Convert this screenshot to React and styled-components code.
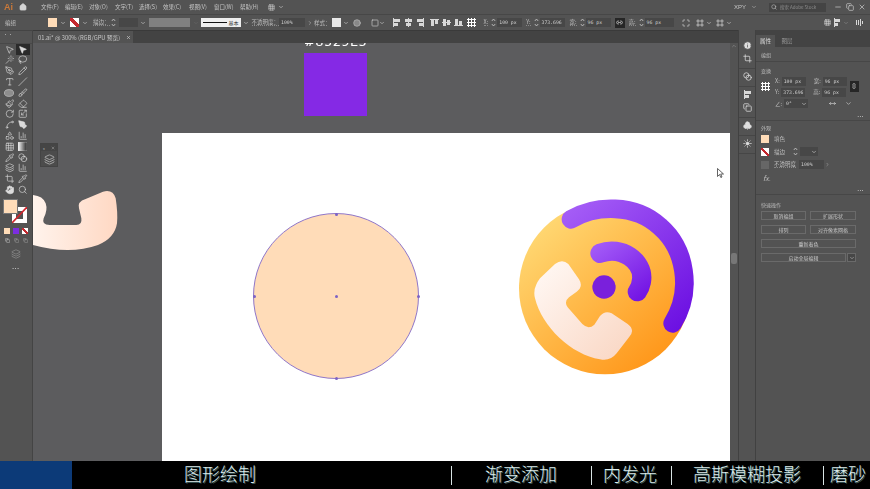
import styled, { createGlobalStyle } from "styled-components";
import {
  MousePointer2, Wand, Lasso, PenTool, Pencil, Type, Slash, Circle, Brush, Eraser,
  RotateCw, Scaling, Shapes, Pipette, ChartColumn, Crop, Hand, Search, Grid3x3,
  Blend, Layers, Copy, Info, X, Minus, House, ChevronDown, ChevronRight, ChevronUp,
  Link2, Club, Sun, Maximize, Spline, Frame, Paintbrush, MoveHorizontal, Square,
} from "lucide-react";

const GlobalStyle = createGlobalStyle`
  html, body { margin: 0; padding: 0; background: #535353; }
  body { font-family: "Noto Sans CJK SC", "Liberation Sans", sans-serif; }
`;

const Page = styled.div`
  width: 870px;
  height: 489px;
  display: flex;
  flex-direction: column;
  overflow: hidden;
  background: #535353;
  color: #c4c4c4;
  font-size: 6px;
`;
const Blurred = styled.div`
  flex: 1;
  min-height: 0;
  display: flex;
  flex-direction: column;
  filter: blur(0.3px);
`;
const MenuBar = styled.div`
  height: 14px;
  display: flex;
  align-items: center;
  flex-shrink: 0;
`;
const Logo = styled.span`
  margin-left: 4px;
  width: 15px;
  font: bold 9px "Liberation Sans", sans-serif;
  color: #c9793a;
`;
const HomeSlot = styled.span`
  width: 22px;
  display: flex;
  color: #d4d4d4;
`;
const MenuItem = styled.span`
  width: ${(p) => p.$w || 24.6}px;
  white-space: nowrap;
  font-size: 5.5px;
`;
const Spacer = styled.div`
  flex: 1;
`;
const WorkspaceName = styled.span`
  font: 6px "Liberation Sans", sans-serif;
  display: flex;
  align-items: center;
  gap: 5px;
  margin-right: 12px;
`;
const SearchBox = styled.div`
  width: 57px;
  height: 9px;
  background: #444;
  display: flex;
  align-items: center;
  gap: 3px;
  padding-left: 2px;
  box-sizing: border-box;
  font-size: 4.5px;
  color: #8a8a8a;
  white-space: nowrap;
  overflow: hidden;
`;
const WinButtons = styled.div`
  display: flex;
  gap: 4px;
  margin: 0 4px 0 8px;
  color: #d0d0d0;
`;
const ControlBar = styled.div`
  height: 15px;
  flex-shrink: 0;
  display: flex;
  align-items: center;
  border-top: 1px solid #474747;
  padding-left: 5px;
  white-space: nowrap;
`;
const Item = styled.div`
  margin-left: ${(p) => p.$ml || 0}px;
  margin-top: ${(p) => p.$mt || 0}px;
  display: flex;
  align-items: center;
  flex-shrink: 0;
  color: ${(p) => p.$color || "inherit"};
`;
const Label = styled.span`
  margin-left: ${(p) => p.$ml || 0}px;
  font-size: 5.5px;
  color: #bdbdbd;
  flex-shrink: 0;
  border-bottom: ${(p) => (p.$under ? "1px dotted #888" : "none")};
  line-height: 6px;
`;
const FxLabel = styled(Label)`
  font-style: italic;
  font-size: 7px;
`;
const Swatch = styled.div`
  margin-left: ${(p) => p.$ml || 0}px;
  width: ${(p) => p.$size || 9}px;
  height: ${(p) => p.$size || 9}px;
  flex-shrink: 0;
  background: ${(p) =>
    p.$none
      ? "linear-gradient(to top right, #fff 38%, #c4282f 38%, #c4282f 62%, #fff 62%)"
      : p.$bg || "#ffdcb8"};
`;
const Input = styled.div`
  margin-left: ${(p) => p.$ml || 0}px;
  width: ${(p) => p.$w || 25}px;
  height: 9px;
  background: ${(p) => (p.$bg ? p.$bg : "#474747")};
  flex-shrink: 0;
  display: flex;
  align-items: center;
  padding-left: 2px;
  box-sizing: border-box;
  font: 4.8px "DejaVu Sans Mono", monospace;
  color: #d0d0d0;
`;
const BrushBox = styled.div`
  margin-left: ${(p) => p.$ml}px;
  width: 40px;
  height: 9px;
  background: #eee;
  flex-shrink: 0;
  display: flex;
  align-items: center;
  gap: 2px;
  padding: 0 2px;
  box-sizing: border-box;
  color: #333;
  font-size: 5px;
`;
const StrokeLine = styled.div`
  flex: 1;
  height: 1px;
  background: #111;
`;
const LinkBox = styled.div`
  margin-left: ${(p) => p.$ml}px;
  margin-top: ${(p) => p.$mt || 0}px;
  width: ${(p) => p.$w || 10}px;
  height: ${(p) => p.$h || 10}px;
  background: #262626;
  flex-shrink: 0;
  display: flex;
  align-items: center;
  justify-content: center;
  color: #eee;

  svg {
    transform: ${(p) => (p.$upright ? "rotate(90deg)" : "none")};
  }
`;

const Body = styled.div`
  flex: 1;
  min-height: 0;
  display: flex;
`;
const ToolsPanel = styled.div`
  width: 32px;
  flex-shrink: 0;
  border-right: 1px solid #444;
  display: flex;
  flex-direction: column;
  align-items: center;
  border-top: 1px solid #444;
`;
const Grip = styled.div`
  width: 100%;
  height: 13px;
  border-bottom: 1px solid #484848;
  box-sizing: border-box;
  padding-left: 3px;
  font-size: 5px;
  line-height: 6px;
  color: #bbb;
`;
const ToolGrid = styled.div`
  display: grid;
  grid-template-columns: 13.5px 13.5px;
  grid-auto-rows: 10.8px;
`;
const Tool = styled.div`
  display: flex;
  align-items: center;
  justify-content: center;
  background: ${(p) => (p.$active ? "#2b2b2b" : "transparent")};
  color: #dcdcdc;
`;
const FillStroke = styled.div`
  position: relative;
  width: 26px;
  height: 25px;
  margin-top: 4px;
`;
const BigFill = styled.div`
  position: absolute;
  left: 0;
  top: 0;
  width: 15px;
  height: 15px;
  background: #ffdcb8;
  border: 1px solid #777;
  box-sizing: border-box;
  z-index: 2;
`;
const BigStroke = styled.svg`
  position: absolute;
  left: 9px;
  top: 8px;
  width: 15px;
  height: 16px;
`;
const SwatchRow = styled.div`
  display: flex;
  justify-content: center;
  gap: ${(p) => p.$gap || 3}px;
  margin-top: ${(p) => p.$mt || 0}px;
`;
const Dots = styled.div`
  margin-top: ${(p) => p.$mt || 0}px;
  font: bold 6px/6px "Liberation Sans", sans-serif;
  letter-spacing: 0.5px;
  color: #d0d0d0;
`;

const Center = styled.div`
  flex: 1;
  min-width: 0;
  display: flex;
  flex-direction: column;
`;
const TabBar = styled.div`
  height: 13px;
  flex-shrink: 0;
  background: #434343;
  display: flex;
  border-top: 1px solid #3a3a3a;
  box-sizing: border-box;
`;
const DocTab = styled.div`
  width: 100px;
  background: #535353;
  display: flex;
  align-items: center;
  justify-content: space-between;
  padding: 0 2px 0 5px;
  box-sizing: border-box;
  font-size: 5.8px;
  color: #c8c8c8;
  white-space: nowrap;
`;
const CanvasRow = styled.div`
  flex: 1;
  min-height: 0;
  display: flex;
`;
const Canvas = styled.div`
  flex: 1;
  position: relative;
  overflow: hidden;
  background: #5c5c5e;
`;
const ColorCode = styled.div`
  position: absolute;
  left: 271px;
  width: 63px;
  top: -9px;
  text-align: center;
  font: 13px/16px "DejaVu Sans", sans-serif;
  letter-spacing: 0.4px;
  color: #fff;
  white-space: nowrap;
`;
const PurpleSquare = styled.div`
  position: absolute;
  left: 271px;
  top: 10px;
  width: 63px;
  height: 63px;
  background: #8529e5;
`;
const Artboard = styled.div`
  position: absolute;
  left: 129px;
  top: 90px;
  width: 568px;
  bottom: 0;
  background: #fff;
`;
const LeftShape = styled.svg`
  position: absolute;
  left: 0;
  top: 147px;
  width: 90px;
  height: 70px;
  overflow: visible;
`;
const FloatPanel = styled.div`
  position: absolute;
  left: 7px;
  top: 100px;
  width: 18px;
  height: 24px;
  background: #4c4c4c;
  border: 1px solid #444;
  box-sizing: border-box;
  display: flex;
  flex-direction: column;
  align-items: center;
  color: #d5d5d5;
`;
const FloatHead = styled.div`
  width: 100%;
  height: 7px;
  background: #454545;
  display: flex;
  align-items: center;
  justify-content: space-between;
  padding: 0 2px;
  box-sizing: border-box;
  font-size: 4px;
  margin-bottom: 3px;
`;
const Peach = styled.div`
  position: absolute;
  left: 91px;
  top: 80px;
  width: 166px;
  height: 166px;
  box-sizing: border-box;
  border-radius: 50%;
  background: #ffdcb8;
  border: 1px solid #8f76c9;
`;
const Anchor = styled.i`
  position: absolute;
  left: ${(p) => p.$x}%;
  top: ${(p) => p.$y}%;
  width: 3px;
  height: 3px;
  margin: -1.5px;
  border-radius: 50%;
  background: #7d63c4;
`;
const AppIcon = styled.svg`
  position: absolute;
  left: 343px;
  top: 57px;
  width: 200px;
  height: 195px;
`;
const Cursor = styled.svg`
  position: absolute;
  left: 555px;
  top: 35px;
  width: 8px;
  height: 10px;
`;
const VScroll = styled.div`
  width: 8px;
  flex-shrink: 0;
  background: #535353;
  position: relative;
  color: #999;
  display: flex;
  justify-content: center;
`;
const Thumb = styled.div`
  position: absolute;
  left: 1px;
  top: 210px;
  width: 6px;
  height: 11px;
  border-radius: 2px;
  background: #777;
`;

const Dock = styled.div`
  width: 18px;
  flex-shrink: 0;
  border-left: 1px solid #414141;
  border-right: 1px solid #414141;
  box-sizing: border-box;
  display: flex;
  flex-direction: column;
  align-items: center;
  padding-top: 7.5px;
  color: #dedede;
`;
const DockGroup = styled.div`
  width: 100%;
  display: flex;
  flex-direction: column;
  align-items: center;
  gap: 4px;
  padding: 3px 0 5px;
  border-bottom: 1px solid #464646;
`;
const Props = styled.div`
  width: 114px;
  flex-shrink: 0;
  display: flex;
  flex-direction: column;
`;
const PropTabs = styled.div`
  height: 17px;
  flex-shrink: 0;
  background: #434343;
  display: flex;
  align-items: flex-end;
  font-size: 5.5px;
`;
const PropTab = styled.div`
  width: ${(p) => p.$w}px;
  height: 12px;
  line-height: 12px;
  text-align: center;
  background: ${(p) => (p.$active ? "#535353" : "transparent")};
  color: ${(p) => (p.$active ? "#e0e0e0" : "#999")};
`;
const Section = styled.div`
  padding: ${(p) => p.$pad || "5px 5px 0"};
  height: ${(p) => p.$h}px;
  box-sizing: border-box;
  flex-shrink: 0;
  border-bottom: ${(p) => (p.$last ? "none" : "1px solid #474747")};
  display: flex;
  flex-direction: column;
`;
const SectionTitle = styled.div`
  font-size: 5px;
  line-height: 7px;
  color: #bdbdbd;
`;
const Row = styled.div`
  display: flex;
  align-items: center;
  height: ${(p) => p.$h || 11}px;
  margin-top: ${(p) => p.$mt || 0}px;
`;
const MoreRow = styled.div`
  display: flex;
  justify-content: flex-end;
  padding-right: 1px;
  font: bold 5px/6px "Liberation Sans", sans-serif;
  letter-spacing: 0.5px;
  color: #ccc;
  margin-top: ${(p) => p.$mt || 0}px;
`;
const TransformGrid = styled.div`
  display: flex;
  margin-top: 1.5px;
`;
const RefPoint = styled.div`
  width: 9px;
  height: 9px;
  margin: ${(p) => (p.$bare ? "0" : "6px 5px 0 0")};
  background: radial-gradient(#fff 1px, transparent 1.3px) 0 0 / 3px 3px;
  flex-shrink: 0;
`;
const Actions = styled.div`
  display: grid;
  grid-template-columns: 45px 46px;
  column-gap: 4px;
  grid-auto-rows: 9px;
  row-gap: 5px;
  margin-top: 3px;
`;
const ActionBtn = styled.div`
  grid-column: ${(p) => (p.$wide ? "1 / span 2" : "auto")};
  display: flex;
  font-size: 5px;
  color: #c8c8c8;
  align-items: center;
  justify-content: center;
  border: 1px solid #6a6a6a;
  box-sizing: border-box;
  white-space: nowrap;
  overflow: hidden;
`;
const SplitBtn = styled.div`
  grid-column: 1 / span 2;
  display: flex;
  gap: 1px;
`;
const SplitMain = styled(ActionBtn)`
  flex: 1;
`;
const SplitArrow = styled(ActionBtn)`
  width: 9px;
  background: #474747;
`;

const Caption = styled.div`
  height: 28px;
  flex-shrink: 0;
  background: #000;
  display: flex;
  align-items: center;
`;
const CaptionBlue = styled.div`
  width: 72px;
  height: 100%;
  background: #0c3a78;
  flex-shrink: 0;
`;
const CaptionText = styled.span`
  margin-left: ${(p) => p.$ml}px;
  padding-bottom: 3px;
  font: 300 18px/25px "Noto Sans CJK SC", sans-serif;
  color: #dfeeee;
  text-shadow: 1px 1px 0 #3a5a5c;
  white-space: nowrap;
  flex-shrink: 0;
`;
const CaptionBar = styled.span`
  margin-left: ${(p) => p.$ml}px;
  width: 1px;
  height: 19px;
  background: #d8e4e4;
  flex-shrink: 0;
`;

function Spin() {
  return (
    <svg width="5" height="9" viewBox="0 0 5 9">
      <path d="M.8 3 2.5 1l1.7 2M.8 6l1.7 2 1.7-2" fill="none" stroke="#ccc" strokeWidth=".8" />
    </svg>
  );
}

function Chev({ ml = 0, color = "#ccc" }) {
  return (
    <Item $ml={ml} $color={color}>
      <ChevronDown size={6} strokeWidth={2.5} />
    </Item>
  );
}

// bars used by the align buttons in the control bar
function AlignIcon({ ml, bars }) {
  return (
    <Item $ml={ml}>
      <svg width="9" height="9" viewBox="0 0 9 9">
        {bars.map((b, i) => (
          <rect key={i} x={b[0]} y={b[1]} width={b[2]} height={b[3]} fill="#d8d8d8" />
        ))}
      </svg>
    </Item>
  );
}

function EllipseTool() {
  return (
    <svg width="10" height="8" viewBox="0 0 10 8">
      <ellipse cx="5" cy="4" rx="4.6" ry="3.4" fill="#8d8d8d" stroke="#ccc" strokeWidth=".6" />
    </svg>
  );
}
function WidthTool(props) {
  return <PenTool {...props} fill="#dcdcdc" />;
}
function GradientBox() {
  return (
    <svg width="9" height="9" viewBox="0 0 9 9">
      <defs>
        <linearGradient id="toolGrad">
          <stop offset="0" stopColor="#fff" />
          <stop offset="1" stopColor="#222" />
        </linearGradient>
      </defs>
      <rect width="9" height="9" fill="url(#toolGrad)" stroke="#ccc" strokeWidth=".5" />
    </svg>
  );
}

const menus = [
  ["文件(F)", 24], ["编辑(E)", 24], ["对象(O)", 26], ["文字(T)", 24], ["选择(S)", 24],
  ["效果(C)", 26], ["视图(V)", 25], ["窗口(W)", 26], ["帮助(H)", 28],
];

const tools = [
  [MousePointer2], [MousePointer2, true, true], [Wand], [Lasso], [PenTool], [Pencil],
  [Type], [Slash], [EllipseTool], [Brush], [Paintbrush], [Eraser], [RotateCw], [Scaling],
  [Spline], [WidthTool], [Shapes], [ChartColumn], [Grid3x3], [GradientBox], [Pipette], [Blend],
  [Layers], [ChartColumn], [Crop], [Pipette], [Hand, true], [Search],
];

function PhoneGradients() {
  return (
    <defs>
      <linearGradient id="disc" x1="0.15" y1="0.1" x2="0.85" y2="0.9">
        <stop offset="0" stopColor="#ffd873" />
        <stop offset="1" stopColor="#ff9619" />
      </linearGradient>
      <linearGradient id="handset" x1="0.1" y1="0.1" x2="0.9" y2="0.9">
        <stop offset="0" stopColor="#fff6f1" />
        <stop offset="1" stopColor="#fad9c7" />
      </linearGradient>
      <linearGradient id="outerArc" gradientUnits="userSpaceOnUse" x1="220" y1="40" x2="540" y2="400">
        <stop offset="0" stopColor="#a45cf6" />
        <stop offset="1" stopColor="#6c10e2" />
      </linearGradient>
      <linearGradient id="innerArc" gradientUnits="userSpaceOnUse" x1="290" y1="160" x2="410" y2="320">
        <stop offset="0" stopColor="#a259f7" />
        <stop offset="1" stopColor="#7416e4" />
      </linearGradient>
      <linearGradient id="leftShape" x1="0" y1="0" x2="1" y2="0">
        <stop offset="0" stopColor="#fff3ec" />
        <stop offset="1" stopColor="#ffd8c3" />
      </linearGradient>
    </defs>
  );
}

export default function App() {
  return (
    <Page>
      <GlobalStyle />
      <Blurred>
        <MenuBar>
          <Logo>Ai</Logo>
          <HomeSlot>
            <House size={8} fill="#d4d4d4" />
          </HomeSlot>
          {menus.map(([m, w]) => (
            <MenuItem key={m} $w={w}>{m}</MenuItem>
          ))}
          <Item $color="#ccc">
            <Grid3x3 size={7} />
            <Chev ml={3} />
          </Item>
          <Spacer />
          <WorkspaceName>
            XPY
            <ChevronDown size={6} />
          </WorkspaceName>
          <SearchBox>
            <Search size={6} color="#ccc" />
            搜索 Adobe Stock
          </SearchBox>
          <WinButtons>
            <Minus size={8} />
            <Copy size={8} />
            <X size={8} />
          </WinButtons>
        </MenuBar>

        <ControlBar>
          <Label>编组</Label>
          <Swatch $ml={32} />
          <Chev ml={3} />
          <Swatch $ml={4} $none />
          <Chev ml={3} />
          <Label $ml={5} $under>描边：</Label>
          <Item $ml={1}><Spin /></Item>
          <Input $ml={3} $w={19} />
          <Chev ml={2} />
          <Input $ml={3} $w={41} $bg="#808080" />
          <Chev ml={3} color="#666" />
          <BrushBox $ml={2}>
            <StrokeLine />
            基本
          </BrushBox>
          <Chev ml={2} />
          <Label $ml={3} $under>不透明度：</Label>
          <Input $w={26}>100%</Input>
          <Item $ml={2}><ChevronRight size={6} /></Item>
          <Label $ml={1}>样式：</Label>
          <Swatch $ml={1} $bg="#e8e8e8" />
          <Chev ml={2} />
          <Item $ml={4} $color="#bbb"><Circle size={8} fill="#888" /></Item>
          <Item $ml={10} $color="#ccc"><Square size={8} /></Item>
          <Chev />
          <AlignIcon ml={7} bars={[[1, 0, 1, 9], [2, 1, 6, 3], [2, 5, 4, 3]]} />
          <AlignIcon ml={3} bars={[[4, 0, 1, 9], [1, 1, 7, 3], [2, 5, 5, 3]]} />
          <AlignIcon ml={3} bars={[[7, 0, 1, 9], [1, 1, 6, 3], [3, 5, 4, 3]]} />
          <AlignIcon ml={5} bars={[[0, 1, 9, 1], [1, 2, 3, 6], [5, 2, 3, 4]]} />
          <AlignIcon ml={3} bars={[[0, 4, 9, 1], [1, 1, 3, 7], [5, 2, 3, 5]]} />
          <AlignIcon ml={3} bars={[[0, 7, 9, 1], [1, 1, 3, 6], [5, 3, 3, 4]]} />
          <Item $ml={4}><RefPoint $bare /></Item>
          <Label $ml={8} $under>X:</Label>
          <Item $ml={3}><Spin /></Item>
          <Input $ml={1} $w={25}>100 px</Input>
          <Label $ml={4} $under>Y:</Label>
          <Item $ml={3}><Spin /></Item>
          <Input $ml={1} $w={25}>373.696</Input>
          <Label $ml={5} $under>宽:</Label>
          <Item $ml={3}><Spin /></Item>
          <Input $ml={1} $w={25}>96 px</Input>
          <LinkBox $ml={4}><Link2 size={7} /></LinkBox>
          <Label $ml={4} $under>高:</Label>
          <Item $ml={3}><Spin /></Item>
          <Input $ml={1} $w={29}>96 px</Input>
          <Item $ml={8} $color="#ddd"><Maximize size={8} /></Item>
          <Item $ml={6} $color="#ddd"><Frame size={8} /></Item>
          <Chev ml={2} />
          <Item $ml={4} $color="#ddd"><Frame size={8} /></Item>
          <Chev ml={2} />
          <Spacer />
          <Item $color="#ddd"><Grid3x3 size={7} /></Item>
          <AlignIcon ml={2} bars={[[1, 0, 1, 9], [2, 1, 5, 3], [2, 5, 3, 3]]} />
          <Chev ml={1} color="#888" />
          <AlignIcon ml={6} bars={[[1, 2, 1, 5], [3, 2, 1, 5], [5, 1, 1, 7], [7, 3, 1, 3]]} />
          <Item $ml={6} />
        </ControlBar>

        <Body>
          <ToolsPanel>
            <Grip>··</Grip>
            <ToolGrid>
              {tools.map(([Icon, solid, active], i) => (
                <Tool key={i} $active={active}>
                  <Icon size={9.5} strokeWidth={1.6} fill={solid ? "#dcdcdc" : "none"} />
                </Tool>
              ))}
            </ToolGrid>
            <FillStroke>
              <BigFill />
              <BigStroke viewBox="0 0 15 16">
                <rect width="15" height="16" fill="#fff" />
                <rect x="4" y="4" width="7" height="8" fill="#535353" />
                <path d="M0 16 15 0" stroke="#d0262e" strokeWidth="1.6" />
              </BigStroke>
            </FillStroke>
            <SwatchRow $mt={4}>
              <Swatch $size={6} />
              <Swatch $size={6} $bg="#7c2de0" />
              <Swatch $size={6} $none />
            </SwatchRow>
            <SwatchRow $mt={4} $gap={4}>
              <Item $color="#ddd"><Copy size={5} /></Item>
              <Item $color="#aaa"><Copy size={5} /></Item>
              <Item $color="#aaa"><Copy size={5} /></Item>
            </SwatchRow>
            <Item $color="#bbb" $mt={6}><Layers size={10} strokeWidth={1} /></Item>
            <Dots $mt={6}>···</Dots>
          </ToolsPanel>

          <Center>
            <TabBar>
              <DocTab>
                01.ai* @ 300% (RGB/GPU 预览)
                <X size={5} strokeWidth={3} />
              </DocTab>
            </TabBar>
            <CanvasRow>
              <Canvas>
                <ColorCode>#8529E5</ColorCode>
                <PurpleSquare />
                <Artboard>
                  <Peach>
                    <Anchor $x={50} $y={0} />
                    <Anchor $x={100} $y={50} />
                    <Anchor $x={50} $y={100} />
                    <Anchor $x={0} $y={50} />
                    <Anchor $x={50} $y={50} />
                  </Peach>
                  <AppIcon viewBox="0 0 600 585">
                    <PhoneGradients />
                    <circle cx="300" cy="295" r="258" fill="url(#disc)" />
                    <path d="M198 88C270 45 390 40 465 110C540 175 565 300 503 400" fill="none" stroke="url(#outerArc)" strokeWidth="56" strokeLinecap="round" />
                    <path d="M285 190C350 165 415 215 410 268Q408 290 397 305" fill="none" stroke="url(#innerArc)" strokeWidth="58" strokeLinecap="round" />
                    <circle cx="297" cy="291" r="35" fill="#7a20dc" />
                    <path d="M150 222Q172 205 190 222L222 268Q236 290 215 305L192 322Q176 335 188 352L232 402Q250 420 268 404L285 378Q300 360 320 370L368 402Q392 420 372 442L335 490Q315 515 285 508C200 495 110 410 90 325Q82 295 105 265Z" fill="url(#handset)" />
                  </AppIcon>
                  <Cursor viewBox="0 0 8 10">
                    <path d="M.5.5v8l2-2 1.3 3 1.2-.5-1.3-3h2.8z" fill="#fff" stroke="#222" strokeWidth=".7" />
                  </Cursor>
                </Artboard>
                <LeftShape viewBox="0 0 270 210">
                  <path d="M0 15Q30 18 38 40Q45 60 32 85Q25 105 50 105L130 105Q148 105 145 85L138 55Q132 35 158 27L210 5Q240-3 248 25Q255 70 252 100Q245 145 195 165Q110 195 0 165Z" fill="url(#leftShape)" />
                </LeftShape>
                <FloatPanel>
                  <FloatHead>
                    <span>«</span>
                    <X size={4} />
                  </FloatHead>
                  <Layers size={11} strokeWidth={1.4} />
                </FloatPanel>
              </Canvas>
              <VScroll>
                <ChevronUp size={6} />
                <Thumb />
              </VScroll>
            </CanvasRow>
          </Center>

          <Dock>
            <DockGroup>
              <Info size={9} fill="#dedede" stroke="#535353" />
              <Crop size={9} />
            </DockGroup>
            <DockGroup>
              <Blend size={9} />
            </DockGroup>
            <DockGroup>
              <AlignIcon bars={[[1, 0, 1, 9], [2, 1, 6, 3], [2, 5, 4, 3]]} />
              <Copy size={9} />
            </DockGroup>
            <DockGroup>
              <Club size={9} fill="#dedede" />
            </DockGroup>
            <DockGroup>
              <Sun size={9} fill="#dedede" />
            </DockGroup>
          </Dock>

          <Props>
            <PropTabs>
              <PropTab $active $w={19}>属性</PropTab>
              <PropTab $w={24}>图层</PropTab>
            </PropTabs>
            <Section $h={15} $pad="4px 5px 0">
              <SectionTitle>编组</SectionTitle>
            </Section>
            <Section $h={59}>
              <SectionTitle>变换</SectionTitle>
              <TransformGrid>
                <RefPoint />
                <div>
                  <Row>
                    <Label>X:</Label>
                    <Input $ml={2} $w={24}>100 px</Input>
                    <Label $ml={8}>宽:</Label>
                    <Input $ml={2} $w={24}>96 px</Input>
                  </Row>
                  <Row>
                    <Label>Y:</Label>
                    <Input $ml={2} $w={24}>373.696</Input>
                    <Label $ml={8}>高:</Label>
                    <Input $ml={2} $w={24}>96 px</Input>
                  </Row>
                </div>
                <LinkBox $ml={3} $w={9} $h={11} $mt={5} $upright>
                  <Link2 size={6} />
                </LinkBox>
              </TransformGrid>
              <Row $h={12}>
                <Label $ml={14}>∠:</Label>
                <Input $ml={2} $w={24}>0°</Input>
                <Chev ml={-7} />
                <Item $ml={22} $color="#ddd"><MoveHorizontal size={7} /></Item>
                <Item $ml={9} $color="#ddd"><ChevronDown size={7} /></Item>
              </Row>
              <MoreRow $mt={3}>···</MoreRow>
            </Section>
            <Section $h={74} $pad="3px 5px 0">
              <SectionTitle>外观</SectionTitle>
              <Row $mt={1} $h={13}>
                <Swatch $size={8} />
                <Label $ml={5}>填色</Label>
              </Row>
              <Row $h={13}>
                <Swatch $size={8} $none />
                <Label $ml={5}>描边</Label>
                <Item $ml={8}><Spin /></Item>
                <Input $ml={2} $w={18} />
                <Chev ml={-7} />
              </Row>
              <Row $h={13}>
                <Swatch $size={8} $bg="#666" />
                <Label $ml={5} $under>不透明度</Label>
                <Input $ml={3} $w={25}>100%</Input>
                <Item $ml={1}><ChevronRight size={5} /></Item>
              </Row>
              <Row $h={13}>
                <FxLabel $ml={2}>fx.</FxLabel>
              </Row>
              <MoreRow $mt={3}>···</MoreRow>
            </Section>
            <Section $h={80} $pad="6px 5px 0" $last>
              <SectionTitle>快速操作</SectionTitle>
              <Actions>
                <ActionBtn>取消编组</ActionBtn>
                <ActionBtn>扩展形状</ActionBtn>
                <ActionBtn>排列</ActionBtn>
                <ActionBtn>对齐像素网格</ActionBtn>
                <ActionBtn $wide>重新着色</ActionBtn>
                <SplitBtn>
                  <SplitMain>启动全局编辑</SplitMain>
                  <SplitArrow><ChevronDown size={6} /></SplitArrow>
                </SplitBtn>
              </Actions>
            </Section>
          </Props>
        </Body>
      </Blurred>

      <Caption>
        <CaptionBlue />
        <CaptionText $ml={112}>图形绘制</CaptionText>
        <CaptionBar $ml={195} />
        <CaptionText $ml={33}>渐变添加</CaptionText>
        <CaptionBar $ml={34} />
        <CaptionText $ml={11}>内发光</CaptionText>
        <CaptionBar $ml={14} />
        <CaptionText $ml={21}>高斯模糊投影</CaptionText>
        <CaptionBar $ml={22} />
        <CaptionText $ml={6}>磨砂</CaptionText>
      </Caption>
    </Page>
  );
}
